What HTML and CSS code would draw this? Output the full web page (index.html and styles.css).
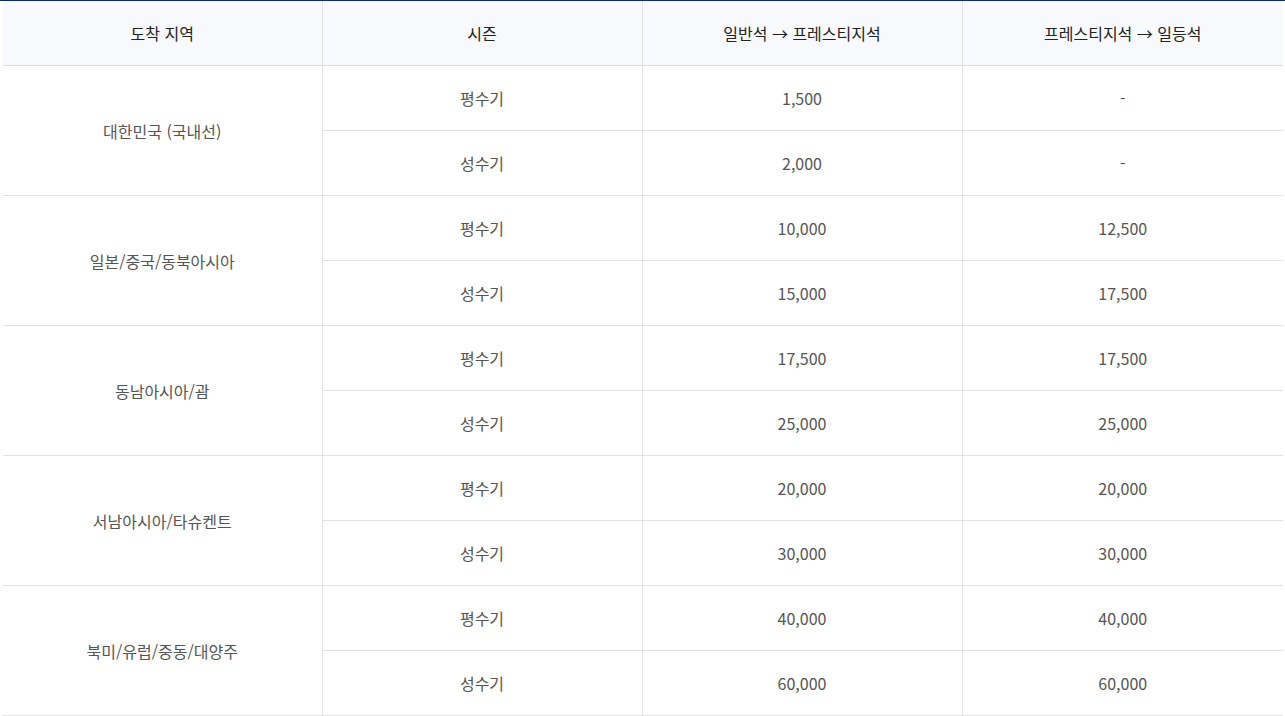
FILE: index.html
```html
<!DOCTYPE html>
<html lang="ko">
<head>
<meta charset="utf-8">
<link rel="stylesheet" href="styles.css">
</head>
<body>
<div class="wrap">
<table class="mile">
<colgroup><col class="c1"><col class="c2"><col class="c3"><col class="c4"></colgroup>
<thead>
<tr><th>도착 지역</th><th>시즌</th><th>일반석 → 프레스티지석</th><th>프레스티지석 → 일등석</th></tr>
</thead>
<tbody>
<tr><td rowspan="2" class="reg">대한민국 (국내선)</td><td>평수기</td><td>1,500</td><td>-</td></tr>
<tr><td>성수기</td><td>2,000</td><td>-</td></tr>
<tr><td rowspan="2" class="reg">일본/중국/동북아시아</td><td>평수기</td><td>10,000</td><td>12,500</td></tr>
<tr><td>성수기</td><td>15,000</td><td>17,500</td></tr>
<tr><td rowspan="2" class="reg">동남아시아/괌</td><td>평수기</td><td>17,500</td><td>17,500</td></tr>
<tr><td>성수기</td><td>25,000</td><td>25,000</td></tr>
<tr><td rowspan="2" class="reg">서남아시아/타슈켄트</td><td>평수기</td><td>20,000</td><td>20,000</td></tr>
<tr><td>성수기</td><td>30,000</td><td>30,000</td></tr>
<tr><td rowspan="2" class="reg">북미/유럽/중동/대양주</td><td>평수기</td><td>40,000</td><td>40,000</td></tr>
<tr><td>성수기</td><td>60,000</td><td>60,000</td></tr>
</tbody>
</table>
</div>
</body>
</html>
```
FILE: styles.css
```css
html, body {
  margin: 0;
  padding: 0;
  background: #fff;
}
body {
  font-family: "Noto Sans CJK KR", "Noto Sans", sans-serif;
  font-size: 16px;
}
.wrap {
  border-top: 1px solid #0b2a6f;
  padding: 0 2px 0 3px;
}
.mile {
  width: 1280px;
  border-collapse: collapse;
  table-layout: fixed;
}
.mile .c1 { width: 319px; }
.mile .c2 { width: 320px; }
.mile .c3 { width: 320px; }
.mile .c4 { width: 321px; }
.mile th {
  height: 64px;
  padding: 0;
  background: #f7f9fd;
  color: #222;
  font-weight: 400;
  text-align: center;
  border-bottom: 1px solid #dcdcdc;
  border-left: 1px solid #e1e1e1;
}
.mile td {
  height: 64px;
  padding: 0;
  color: #555;
  text-align: center;
  border-bottom: 1px solid #e1e1e1;
  border-left: 1px solid #e1e1e1;
}
.mile th:first-child,
.mile td.reg {
  border-left: none;
}
```
